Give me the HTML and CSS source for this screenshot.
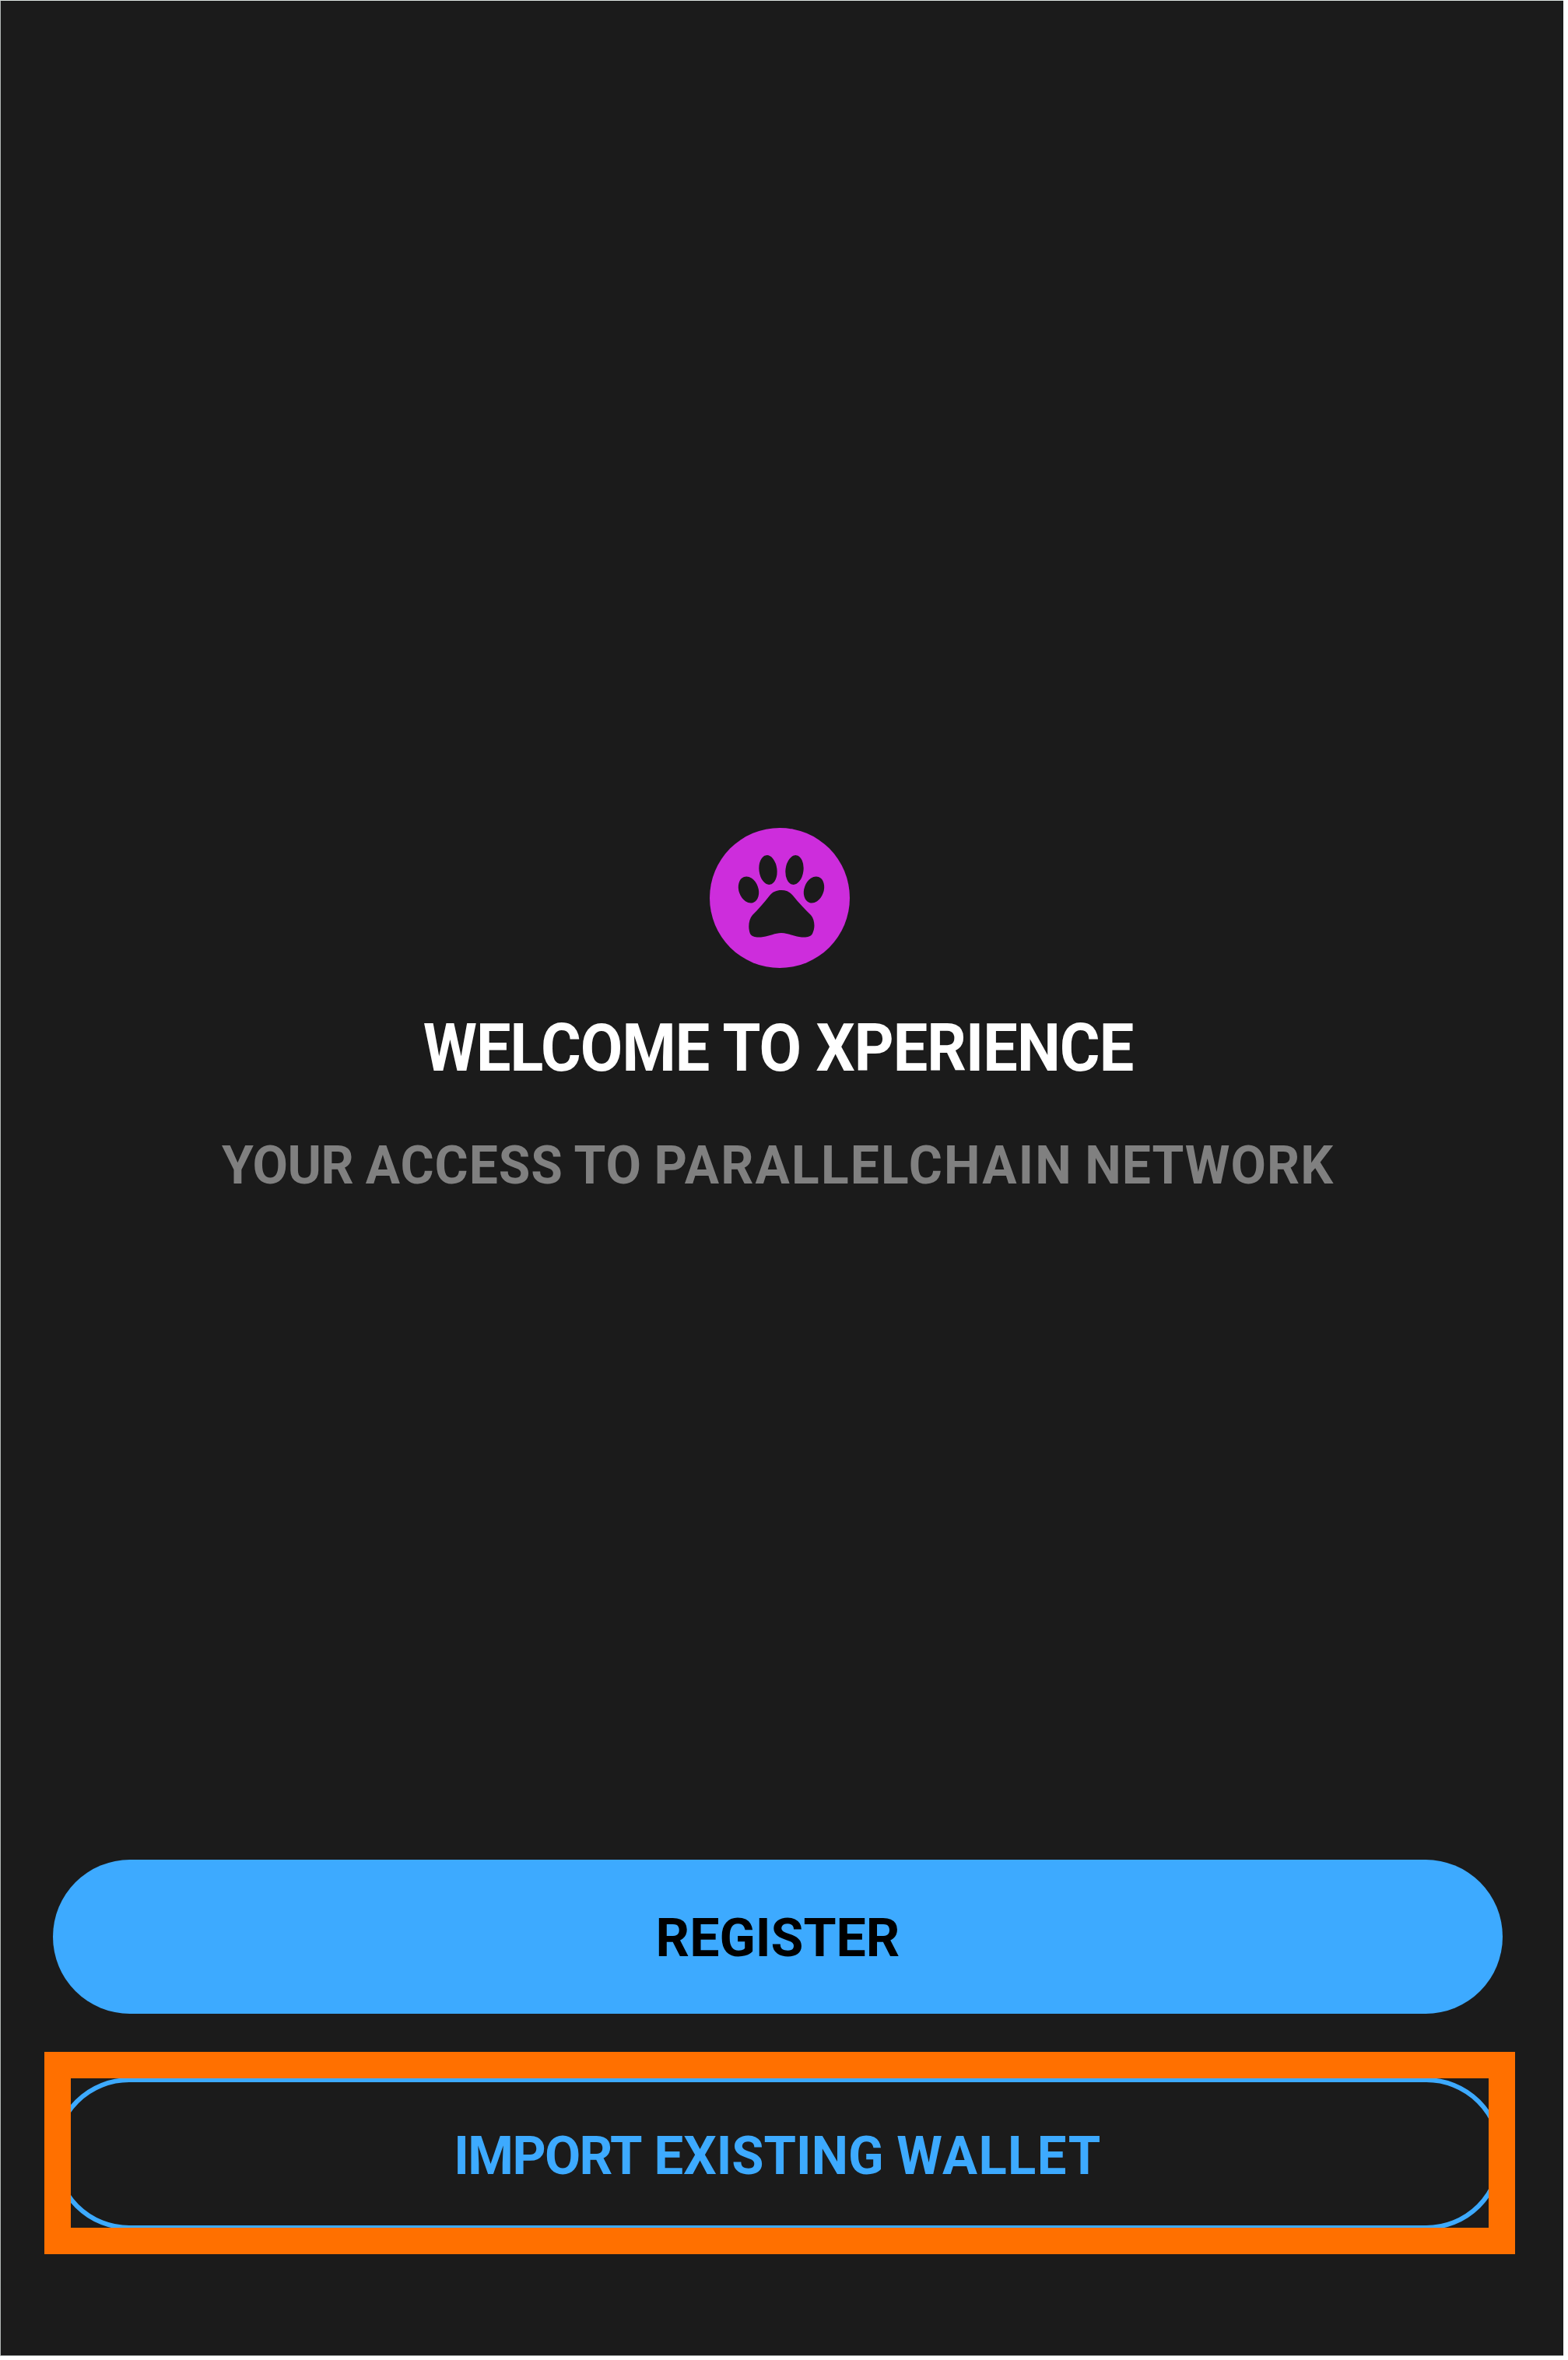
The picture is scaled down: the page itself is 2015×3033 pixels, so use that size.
FILE: index.html
```html
<!DOCTYPE html>
<html lang="en">
<head>
<meta charset="utf-8">
<title>Xperience</title>
<link rel="stylesheet" href="styles.css">
</head>
<body>
<main class="screen">
  <section class="hero">
    <svg class="logo" viewBox="0 0 180 180" aria-hidden="true">
      <circle class="logo-disc" cx="90" cy="90" r="90"/>
      <g class="logo-paw">
        <ellipse cx="75" cy="54" rx="11.500" ry="19" transform="rotate(-7 75 54)"/>
        <ellipse cx="109" cy="54" rx="11.500" ry="19" transform="rotate(7 109 54)"/>
        <ellipse cx="50" cy="79.500" rx="12.500" ry="17.500" transform="rotate(-20 50 79.500)"/>
        <ellipse cx="134" cy="79.500" rx="12.500" ry="17.500" transform="rotate(20 134 79.500)"/>
        <path d="M92 80C98 80 103 82 107 87C114 96 123 105 130 112C135 118 136 128 132 136C129 141 122 141 115 140C107 139 100 135 92 135C84 135 77 139 69 140C62 141 55 141 52 136C49 128 50 118 55 112C62 105 70 96 77 87C81 82 86 80 92 80Z"/>
      </g>
    </svg>
    <h1 class="title"><span class="line">WELCOME TO XPERIENCE</span></h1>
    <p class="subtitle"><span class="line"><span class="tight">YOUR</span> ACCESS TO <span class="loose">PARALLELCHAIN</span> NETWORK</span></p>
  </section>
  <section class="actions">
    <button class="btn btn-primary"><span class="line">REGISTER</span></button>
    <div class="highlighted">
      <button class="btn btn-outline"><span class="line"><span class="tight">IMPORT</span> EXISTING <span class="loose">WALLET</span></span></button>
      <div class="highlight"></div>
    </div>
  </section>
</main>
</body>
</html>
```
FILE: styles.css
```css
* { box-sizing: border-box; }
body { margin: 0; background: #fff; }

.screen {
  display: flex;
  flex-direction: column;
  justify-content: space-between;
  width: 2009px;
  height: 3028px;
  padding: 1063px 78px 161px 67px;
  border: 1px solid #b4b8b6;
  border-top-color: #dde5e2;
  border-right: 0;
  background: #1b1b1b;
  font-family: Roboto, "Liberation Sans", sans-serif;
  font-weight: 700;
}

.hero {
  display: flex;
  flex-direction: column;
  align-items: center;
}
.line { display: inline-block; white-space: nowrap; }

.logo { display: block; width: 180px; height: 180px; margin-left: 5px; }
.logo-disc { fill: #cd2ddc; }
.logo-paw { fill: #1b1b1b; }

.title {
  margin: 53px 0 0;
  color: #fff;
  font-size: 86px;
  font-weight: 700;
  line-height: 100px;
  letter-spacing: -1px;
  word-spacing: 0.5px;
}
.title .line { transform: scaleX(0.92); }

.subtitle {
  margin: 51px 0 0;
  color: #808080;
  font-size: 68px;
  font-weight: 700;
  line-height: 100px;
  letter-spacing: 1px;
  word-spacing: -2px;
}
.subtitle .line { transform: scaleX(0.97); }
.subtitle .tight { letter-spacing: -0.5px; }
.subtitle .loose { letter-spacing: 2.2px; }

.actions {
  display: flex;
  flex-direction: column;
  gap: 82px;
}
.highlighted { position: relative; }

.btn {
  display: flex;
  align-items: center;
  justify-content: center;
  width: 100%;
  height: 198px;
  padding: 4px 0 0;
  border: 0;
  border-radius: 99px;
  font: inherit;
  font-size: 68px;
}
.btn-primary { background: #3daaff; color: #000; }
.btn-outline {
  height: 196px;
  padding: 6px 0 0;
  border: 6px solid #3daaff;
  background: transparent;
  color: #3daaff;
}
.btn-outline .line { transform: scaleX(0.985); }
.btn-outline .tight { letter-spacing: -1.6px; }
.btn-outline .loose { letter-spacing: 1.5px; }

/* Callout frame drawn over the import button */
.highlight {
  position: absolute;
  inset: -33px -16px -31px -11px;
  border: 34px solid #ff7000;
}
```
